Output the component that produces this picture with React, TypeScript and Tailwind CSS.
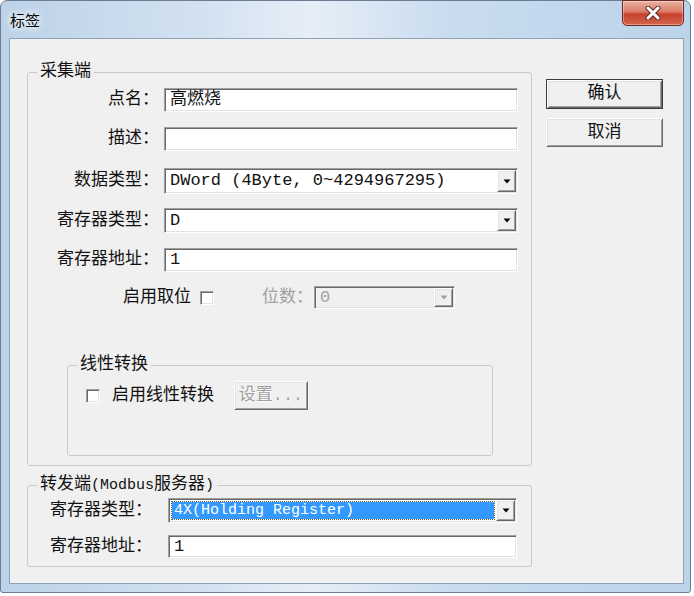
import React from "react";

const sunken =
  "border border-t-[#a0a0a0] border-l-[#a0a0a0] border-r-white border-b-white shadow-[inset_1px_1px_0_#696969,inset_-1px_-1px_0_#e3e3e3]";
const raised =
  "border border-t-white border-l-white border-r-[#696969] border-b-[#696969] shadow-[inset_1px_1px_0_#e3e3e3,inset_-1px_-1px_0_#a0a0a0]";

function Arrow({ gray }: { gray?: boolean }) {
  return (
    <svg width="8" height="5" viewBox="0 0 8 5">
      <path d="M0.5 0.5h7l-3.5 4z" fill={gray ? "#a0a0a0" : "#000"} />
    </svg>
  );
}

function Edit({ value, className }: { value?: string; className: string }) {
  return (
    <div className={`${sunken} bg-white flex items-center pl-[5px] ${className}`}>
      {value}
    </div>
  );
}

function Combo({
  value,
  className,
  disabled,
  selected,
}: {
  value: string;
  className: string;
  disabled?: boolean;
  selected?: boolean;
}) {
  return (
    <div
      className={`${sunken} flex items-stretch p-[1px] ${
        disabled ? "bg-[#f0f0f0]" : "bg-white"
      } ${className}`}
    >
      <div className="flex-1 flex items-center p-[2px]">
        {selected ? (
          <div className="h-full w-full bg-[#3399ff] outline outline-1 outline-dotted outline-[#6b5a3a] flex items-center pl-[2px] text-white text-[15px]">
            {value}
          </div>
        ) : (
          <span className={`pl-[2px] ${disabled ? "text-[#a0a0a0]" : ""}`}>{value}</span>
        )}
      </div>
      <div className={`${raised} w-[19px] bg-[#f0f0f0] flex items-center justify-center`}>
        <Arrow gray={disabled} />
      </div>
    </div>
  );
}

function Check() {
  return <div className={`${sunken} w-[14px] h-[14px] bg-white shrink-0`} />;
}

function Row({
  label,
  mt,
  children,
}: {
  label: string;
  mt: string;
  children: React.ReactNode;
}) {
  return (
    <div className={`flex items-center ${mt}`}>
      <div className="w-[131px] text-right">{label}</div>
      {children}
    </div>
  );
}

export default function App() {
  return (
    <div className="w-[694px] h-[596px] bg-white overflow-hidden font-['Liberation_Mono','Noto_Sans_CJK_SC',monospace] text-[17px] leading-[20px] text-[#111]">
      <div className="w-[691px] h-[593px] rounded-t-[7px] rounded-b-[3px] border border-[#6a7d92] bg-[linear-gradient(90deg,#bdd2e8_0%,#d3e2f1_30%,#e6eef7_45%,#c9dcef_65%,#bcd3ea_100%)] flex flex-col">
        <div className="h-[37px] flex items-start shrink-0">
          <div className="pt-[9px] pl-[9px] text-[15px] font-['Noto_Sans_CJK_SC',sans-serif] text-black [text-shadow:0_0_6px_#fff,0_0_10px_#fff]">
            标签
          </div>
          <div className="flex-1" />
          <div className="mr-[6px] -mt-px w-[62px] h-[26px] rounded-b-[5px] border border-[#6e2a22] bg-[linear-gradient(180deg,#eab2a4_0%,#dc7a66_45%,#c8402c_55%,#d2664f_100%)] flex items-center justify-center shadow-[inset_0_0_0_1px_rgba(255,255,255,0.35)]">
            <svg width="16" height="14" viewBox="0 0 16 14">
              <path d="M3 2l10 10M13 2L3 12" stroke="#5a2a24" strokeWidth="5" strokeLinecap="round" />
              <path d="M3 2l10 10M13 2L3 12" stroke="#fff" strokeWidth="3" strokeLinecap="round" />
            </svg>
          </div>
        </div>

        <div className="ml-[8px] mr-[6px] mb-[8px] flex-1 border border-[#8ea3b8] bg-[#f0f0f0] flex pl-[17px] pt-[23px]">
          <div className="w-[505px] flex flex-col">
            <fieldset className="border border-[#c9c9c9] rounded-[3px] pb-[9px]">
              <legend className="ml-[9px] px-[3px]">采集端</legend>
              <Row label="点名：" mt="mt-[6px]">
                <Edit value="高燃烧" className="ml-[5px] w-[354px] h-[24px]" />
              </Row>
              <Row label="描述：" mt="mt-[15px]">
                <Edit className="ml-[5px] w-[354px] h-[24px]" />
              </Row>
              <Row label="数据类型：" mt="mt-[17px]">
                <Combo value="DWord (4Byte, 0~4294967295)" className="ml-[5px] w-[354px] h-[26px]" />
              </Row>
              <Row label="寄存器类型：" mt="mt-[14px]">
                <Combo value="D" className="ml-[5px] w-[354px] h-[25px]" />
              </Row>
              <Row label="寄存器地址：" mt="mt-[15px]">
                <Edit value="1" className="ml-[5px] w-[354px] h-[24px]" />
              </Row>
              <div className="flex items-center mt-[14px] pl-[95px]">
                <span>启用取位</span>
                <div className="ml-[9px]">
                  <Check />
                </div>
                <span className="ml-[48px] text-[#a0a0a0]">位数：</span>
                <Combo value="0" disabled className="ml-[1px] w-[141px] h-[23px]" />
              </div>

              <fieldset className="mt-[46px] ml-[39px] w-[426px] border border-[#c9c9c9] rounded-[3px] pb-[45px]">
                <legend className="ml-[9px] px-[3px]">线性转换</legend>
                <div className="flex items-center mt-[6px] pl-[18px]">
                  <Check />
                  <span className="ml-[12px]">启用线性转换</span>
                  <div className={`${raised} ml-[20px] w-[74px] h-[29px] flex items-center justify-center text-[#a0a0a0] [text-shadow:1px_1px_0_#fff]`}>
                    设置...
                  </div>
                </div>
              </fieldset>
            </fieldset>

            <fieldset className="mt-[9px] border border-[#c9c9c9] rounded-[3px] pb-[8px]">
              <legend className="ml-[9px] px-[3px]">
                转发端<span className="text-[15px]">(Modbus</span>服务器<span className="text-[15px]">)</span>
              </legend>
              <div className="flex items-center mt-[2px] pl-[22px]">
                <div className="w-[118px]">寄存器类型：</div>
                <Combo value="4X(Holding Register)" selected className="w-[349px] h-[25px]" />
              </div>
              <div className="flex items-center mt-[12px] pl-[22px]">
                <div className="w-[118px]">寄存器地址：</div>
                <Edit value="1" className="w-[349px] h-[23px]" />
              </div>
            </fieldset>
          </div>

          <div className="ml-[14px] mt-[17px] w-[117px] flex flex-col">
            <div className="h-[30px] border border-[#3c3c3c] bg-[#f0f0f0] flex items-center justify-center shadow-[inset_1px_1px_0_#fff,inset_-1px_-1px_0_#696969,inset_2px_2px_0_#e3e3e3,inset_-2px_-2px_0_#a0a0a0]">
              确认
            </div>
            <div className={`${raised} mt-[9px] h-[29px] bg-[#f0f0f0] flex items-center justify-center`}>
              取消
            </div>
          </div>
        </div>
      </div>
    </div>
  );
}
